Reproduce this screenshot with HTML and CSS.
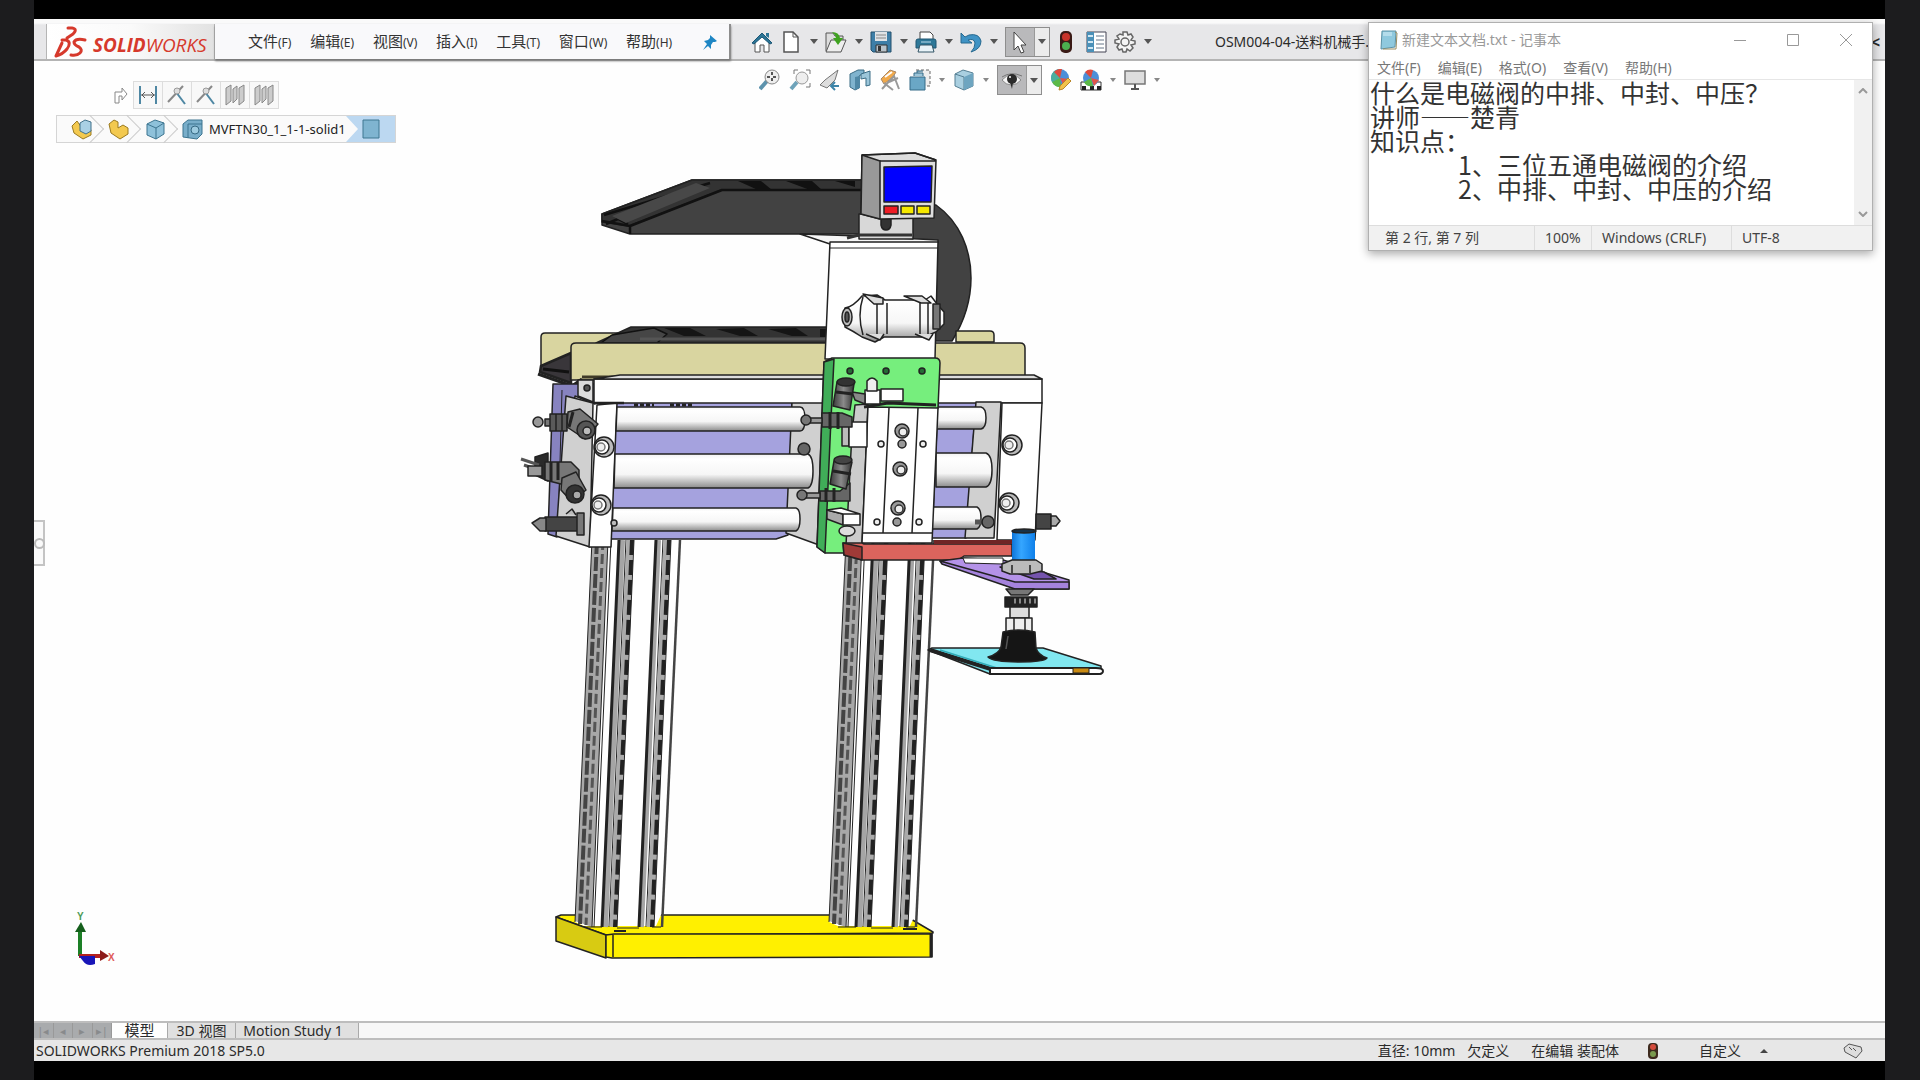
FILE: index.html
```html
<!DOCTYPE html>
<html lang="zh-CN">
<head>
<meta charset="utf-8">
<title>SOLIDWORKS Premium 2018</title>
<link rel="stylesheet" href="styles.css">
</head>
<body>
<div class="stage">
<div class="app">
  <header class="topbar">
    <div class="brand">
      <svg class="brand-mark" width="34" height="32" viewBox="0 0 34 32" fill="none" stroke="#d6392c" stroke-width="3" stroke-linecap="round" stroke-linejoin="round"><path d="M14 2h4q6 1 1 6l-6 4"/><path d="M8 14h4q6 2 1 9-4 5-11 7l6-13"/><path d="M31 14q-9-2-11 2 0 3 5 5 4 3 1 6-3 3-9 2"/></svg>
      <span class="brand-name"><b>SOLID</b>WORKS</span>
    </div>
    <nav class="menu">
      <button>文件<small>(F)</small></button>
      <button>编辑<small>(E)</small></button>
      <button>视图<small>(V)</small></button>
      <button>插入<small>(I)</small></button>
      <button>工具<small>(T)</small></button>
      <button>窗口<small>(W)</small></button>
      <button>帮助<small>(H)</small></button>
      <button class="pin" aria-label="固定菜单"><svg width="18" height="18" viewBox="0 0 18 18"><path d="M9 2l7 6-2 1-2 0-2 3 0 4-3-3-5 4 4-6-3-3 4-1 2-2z" fill="#1e86c4"/></svg></button>
    </nav>
    <div class="tools">
      <button class="ico gap" aria-label="主页"><svg viewBox="0 0 22 22"><path d="M4 10v11h5v-7h4v7h5V10l-7-6z" fill="#fff" stroke="#555"/><path d="M1 12L11 2l10 10-2 1-8-7-8 7z" fill="#2c7596" stroke="#1b5675"/><path d="M15 2h3v5l-3-2z" fill="#2c7596"/></svg></button>
      <button class="ico" aria-label="新建"><svg viewBox="0 0 22 22"><path d="M4 1h9l5 5v15H4z" fill="#fff" stroke="#555" stroke-width="1.500"/><path d="M13 1v5h5" fill="none" stroke="#555"/></svg></button>
      <button class="drop" aria-label="新建选项"></button>
      <button class="ico" aria-label="打开"><svg viewBox="0 0 22 22"><path d="M1 20V2h7l2 3h8v5" fill="#ddd" stroke="#555"/><path d="M1 21L6 9h15l-5 12z" fill="#eee" stroke="#555"/><path d="M7 1q7 0 8 6h3l-5 7-5-7h3q-1-4-4-6z" fill="#3fa31f"/></svg></button>
      <button class="drop" aria-label="打开选项"></button>
      <button class="ico" aria-label="保存"><svg viewBox="0 0 22 22"><path d="M1 1h20v20H3l-2-2z" fill="#3d7ea7" stroke="#25506c"/><path d="M5 1h12v9H5z" fill="#dfe3e6"/><path d="M6 4h10M6 7h10" stroke="#888"/><path d="M6 14h11v7H6z" fill="#b9c3ca" stroke="#333"/><path d="M8 15h3v5H8z" fill="#333"/></svg></button>
      <button class="drop" aria-label="保存选项"></button>
      <button class="ico" aria-label="打印"><svg viewBox="0 0 22 22"><path d="M5 9V1h10l3 3v5" fill="#fff" stroke="#444"/><path d="M1 10q0-2 2-2h16q2 0 2 2v7H1z" fill="#2e7898" stroke="#205772"/><path d="M5 14h12l2 7H3z" fill="#e9f3f8" stroke="#356"/><path d="M6 11h10" stroke="#bde"/></svg></button>
      <button class="drop" aria-label="打印选项"></button>
      <button class="ico" aria-label="撤消"><svg viewBox="0 0 22 22"><path d="M1 2v10h11L8 9q6-2 7 3 0 5-4 9 10-3 10-11Q19 2 9 4L5 6z" fill="#3f93c5" stroke="#27698f"/></svg></button>
      <button class="drop" aria-label="撤消选项"></button>
      <div class="split">
        <button class="on" aria-label="选择"><svg width="22" height="24" viewBox="0 0 22 24"><path d="M5 2v18l4-4 3 7 3-1-3-7h5z" fill="#fff" stroke="#444"/></svg></button><button class="drop" aria-label="选择选项"></button>
      </div>
      <button class="ico light" aria-label="重建模型"><svg viewBox="0 0 22 22"><rect x="5" y="0" width="12" height="22" rx="5" fill="#3a1a16"/><circle cx="11" cy="6" r="4" fill="#c8332a"/><circle cx="11" cy="15" r="4" fill="#4cae4f"/></svg></button>
      <button class="ico gap" aria-label="文件属性"><svg viewBox="0 0 22 22"><path d="M2 1h19v20H2z" fill="#fff" stroke="#445"/><path d="M2 1h7v20H2z" fill="#4a90b8"/><path d="M3 5h5M3 11h5M3 17h5" stroke="#cfe6f2" stroke-width="2"/><path d="M11 5h8M11 9h8M11 13h8M11 17h8" stroke="#678"/></svg></button>
      <button class="ico" aria-label="选项"><svg viewBox="0 0 22 22" fill="none" stroke="#666" stroke-width="1.500"><path d="M9 1h4l1 3 3-1 2 3-2 3 4 1v3l-4 1 2 3-3 3-3-2-1 3H9l-1-3-3 1-2-3 2-3-4-1V9l4-1-2-3 3-2 3 1z" fill="#f4f4f4"/><circle cx="11" cy="11" r="4"/></svg></button>
      <button class="drop" aria-label="选项菜单"></button>
      <span class="doc">OSM004-04-送料机械手.</span>
    </div>
    <span class="chev">&lt;</span>
  </header>

  <main class="viewport">
    <div class="overlays">
      <div class="context">
        <div class="mates">
          <svg width="15" height="18" viewBox="0 0 15 18"><path d="M2 17V6h7V2l5 6-5 6v-4H6v7z" fill="#fff" stroke="#888"/></svg>
          <div class="mate-row">
            <button aria-label="距离配合"><svg viewBox="0 0 22 22" stroke="#4e87a3" stroke-width="2" fill="none"><path d="M3 2v18M19 2v18"/><path d="M4 11h14M8 8l-3 3 3 3M14 8l3 3-3 3" stroke="#555" stroke-width="1"/></svg></button>
            <button aria-label="重合配合一"><svg viewBox="0 0 22 22" fill="none" stroke-width="2"><path d="M2 18L17 2" stroke="#888"/><path d="M10 8l9 12" stroke="#4e87a3"/><circle cx="11" cy="7" r="3" fill="#ddd" stroke="#999" stroke-width="1"/></svg></button>
            <button aria-label="重合配合二"><svg viewBox="0 0 22 22" fill="none" stroke-width="2"><path d="M2 18L17 2" stroke="#888"/><path d="M10 8l9 12" stroke="#4e87a3"/><circle cx="11" cy="7" r="3" fill="#ddd" stroke="#999" stroke-width="1"/></svg></button>
            <button aria-label="对称配合一"><svg viewBox="0 0 22 22" fill="#ccc" stroke="#888"><path d="M2 4l5-3v16l-5 4zM9 5l4-3v13l-4 4zM15 4l5-3v16l-5 4z"/></svg></button>
            <button aria-label="对称配合二"><svg viewBox="0 0 22 22" fill="#ccc" stroke="#888"><path d="M2 4l5-3v16l-5 4zM9 5l4-3v13l-4 4zM15 4l5-3v16l-5 4z"/></svg></button>
          </div>
        </div>
        <nav class="crumbs">
          <a href="#assembly" aria-label="装配体"><svg viewBox="0 0 22 22"><path d="M1 8l5-5 5 7 5-3 4 5v5l-8 4-9-6z" fill="#f3c94f" stroke="#9a7a20"/><path d="M9 5l5-3 6 2v9l-5 3-6-3z" fill="#a9d0e4" stroke="#41718a"/></svg></a>
          <a href="#sub" aria-label="子装配体"><svg viewBox="0 0 22 22"><path d="M1 6l5-4 4 2v6l5-3 5 3v6l-8 5-9-6z" fill="#f3c94f" stroke="#9a7a20"/></svg></a>
          <a href="#body" aria-label="实体"><svg viewBox="0 0 22 22"><path d="M2 6l8-4 9 3v11l-8 5-9-4z" fill="#8ec1da" stroke="#3d7590"/><path d="M2 6l9 4 8-5M11 10v11" fill="none" stroke="#3d7590"/></svg></a>
          <a href="#feature" class="named"><svg viewBox="0 0 22 22"><path d="M1 6l5-4h14v14l-5 5-14-2z" fill="#79aeca" stroke="#3d7590"/><path d="M6 6h14M6 6v14" stroke="#3d7590"/><circle cx="13" cy="12" r="4" fill="#9dcbe0" stroke="#376a84"/></svg>MVFTN30_1_1-1-solid1</a>
          <a href="#face" class="face" aria-label="面"><svg viewBox="0 0 22 22"><path d="M3 2h16v18H3z" fill="#7fb4d0" stroke="#3f7690"/></svg></a>
        </nav>
      </div>
      <div class="views">
        <button class="ico" aria-label="整屏显示"><svg viewBox="0 0 22 22"><path d="M1 20l7-8" stroke="#5d93ad" stroke-width="4"/><circle cx="13" cy="8" r="7" fill="#eee" stroke="#888"/><path d="M13 3v10M8 8h10" stroke="#555" stroke-dasharray="3 3" stroke-width="2"/></svg></button>
        <button class="ico" aria-label="局部放大"><svg viewBox="0 0 22 22"><path d="M2 20l6-7" stroke="#6fa3ba" stroke-width="4"/><circle cx="13" cy="9" r="6" fill="#eee" stroke="#999"/><path d="M5 5V1h4M17 1h4v4M21 14v4h-4" fill="none" stroke="#777"/></svg></button>
        <button class="ico" aria-label="上一视图"><svg viewBox="0 0 22 22"><path d="M1 16l5-5L19 1l-3 10-8 8z" fill="#ddd" stroke="#777"/><path d="M20 17h-8m4-4l-4 4 4 4" fill="none" stroke="#3c84a8" stroke-width="2"/></svg></button>
        <button class="ico" aria-label="剖面视图"><svg viewBox="0 0 22 22"><path d="M1 5l8-4h6v3l-5 3v12l-4 2-5-3z" fill="#7fb3ce" stroke="#3b6c85"/><path d="M6 8l5-1v12l-5 2z" fill="#4f88a6"/><path d="M12 5l9-3v14l-4 1V9l-5 1z" fill="#9cc6da" stroke="#3b6c85"/></svg></button>
        <button class="ico" aria-label="动态注解"><svg viewBox="0 0 22 22"><path d="M2 10L11 1l6 2-3 5-9 7z" fill="#f0a94b" stroke="#a86"/><path d="M6 8l7-5" stroke="#fff" stroke-width="2"/><path d="M3 20L15 7l5 13M5 14l9 7M10 13l9-4" fill="none" stroke="#999" stroke-width="2"/></svg></button>
        <button class="ico" aria-label="视图定向"><svg viewBox="0 0 22 22"><path d="M7 1h14v16h-5" fill="#eee" stroke="#666" stroke-dasharray="3 2"/><path d="M1 8h15v13H1z" fill="#6aa7c6" stroke="#356b87"/><path d="M5 7V4h9v3M8 4V2h6" fill="#9cc6da" stroke="#356b87"/></svg></button>
        <button class="tri" aria-label="定向选项"></button>
        <button class="ico" aria-label="显示样式"><svg viewBox="0 0 22 22"><path d="M2 5l8-4 10 3v13l-9 4-9-4z" fill="#a9cfe0" stroke="#557f93"/><path d="M2 5l9 3v13" fill="none" stroke="#557f93"/><path d="M11 8l9-4v13l-9 4z" fill="#6ea5c0"/></svg></button>
        <button class="tri" aria-label="样式选项"></button>
        <div class="split">
          <button class="on" aria-label="隐藏/显示项目"><svg width="24" height="24" viewBox="0 0 24 24"><path d="M2 9q9-6 20-1" fill="none" stroke="#777"/><path d="M2 12q4-5 10-5 5 0 9 5-4 5-10 5-5 0-9-5z" fill="#f5f5f5" stroke="#888"/><circle cx="12" cy="11" r="5" fill="#2b2b2b"/><circle cx="10" cy="9" r="1" fill="#fff"/><path d="M13 14l-1 7-2-7z" fill="#2b2b2b"/></svg></button><button class="drop" aria-label="显示选项"></button>
        </div>
        <button class="ico" aria-label="编辑外观"><svg viewBox="0 0 22 22"><circle cx="10" cy="9" r="9" fill="#4c8fd8"/><path d="M10 9V0A9 9 0 0 0 2 13z" fill="#4cae9d"/><path d="M10 9L4 3a9 9 0 0 1 8-3z" fill="#e0493d"/><path d="M10 9L2 13a9 9 0 0 0 9 5z" fill="#5cb947"/><path d="M10 9l9 1-5 7z" fill="#e0564a"/><path d="M9 21l1-4 8-8 3 3-8 8z" fill="#f1c34c" stroke="#b8862b"/></svg></button>
        <button class="ico" aria-label="应用布景"><svg viewBox="0 0 22 22"><path d="M1 13h20v8H1z" fill="#fff" stroke="#333"/><path d="M2 17h4v4H2zM10 17h4v4h-4zM17 17h4v4h-4z" fill="#222"/><circle cx="11" cy="9" r="8" fill="#4c8fd8"/><path d="M11 9L5 3a8 8 0 0 1 8-2z" fill="#e0493d"/><path d="M11 9l-7 4a8 8 0 0 0 9 4z" fill="#5cb947"/><path d="M11 9l8 2-5 6z" fill="#e0564a"/></svg></button>
        <button class="tri" aria-label="布景选项"></button>
        <button class="ico" aria-label="视图设定"><svg viewBox="0 0 22 22"><path d="M1 2h20v13H1z" fill="#ddd" stroke="#777" stroke-width="1.500"/><path d="M11 15v4M7 20h8" stroke="#555" stroke-width="2"/></svg></button>
        <button class="tri" aria-label="设定选项"></button>
      </div>
    </div>

    <svg class="model" width="640" height="830" viewBox="480 150 640 830" stroke="#222" stroke-width="1.500" stroke-linejoin="round" role="img" aria-label="送料机械手">
      <defs>
        <linearGradient id="rod" x1="0" y1="0" x2="0" y2="1"><stop offset="0" stop-color="#f2f2f2"/><stop offset=".15" stop-color="#fff"/><stop offset=".6" stop-color="#f6f6f6"/><stop offset="1" stop-color="#8c8c8c"/></linearGradient>
        <linearGradient id="blue" x1="0" y1="0" x2="1" y2="0"><stop offset="0" stop-color="#0d74d8"/><stop offset=".4" stop-color="#35a6ff"/><stop offset="1" stop-color="#0f80ea"/></linearGradient>
        <linearGradient id="dark" x1="0" y1="0" x2="1" y2="0"><stop offset="0" stop-color="#3a3a3a"/><stop offset=".5" stop-color="#8a8a8a"/><stop offset="1" stop-color="#333"/></linearGradient>
        <g id="leg">
          <path d="M592 540L575 922l9 4h72l5-11 19-375z" fill="#fff" stroke="none"/>
          <path d="M592 540h16l-16 387-17-6z" fill="#a8a8a8" stroke="none"/>
          <path d="M597 540l-17 384" stroke="#444" stroke-width="4" stroke-dasharray="14 3" fill="none"/>
          <path d="M603 540l-17 385" stroke="#555" stroke-width="3" stroke-dasharray="10 4" fill="none"/>
          <path d="M592 540l-17 382M608 540l-16 387M611 540l-17 387" stroke-width="1" fill="none"/>
          <path d="M622 540l-17 387M658 540l-17 387" stroke-width="6" stroke="#a5a5a5"/>
          <path d="M619 540l-17 387M656 540l-17 387" stroke-width="3"/>
          <path d="M626 540l-17 387M663 540l-17 387" stroke-width="1"/>
          <path d="M630 540l-17 387M667 540l-17 387" stroke-width="7" stroke="#aaa"/>
          <path d="M632 540l-17 387M669 540l-17 387" stroke-width="4" stroke-dasharray="15 5"/>
          <path d="M634 540l-17 387M671 540l-17 387" stroke-width="1"/>
          <path d="M680 540l-18 387" stroke-width="2.500" stroke="#444"/>
          <path d="M584 927h18M617 928h22M652 927h9" stroke-width="1"/>
        </g>
        <g id="screw"><circle r="10" fill="#bbb"/><circle r="7" cx="-2" fill="#fff"/><circle r="4" cx="-3" fill="#eee" stroke="#777"/></g>
        <g id="hole"><circle r="7" fill="#999"/><circle r="4" cx="1" cy="1" fill="#eee" stroke="#333"/></g>
      </defs>

      <!-- base tray -->
      <path d="M556 917l5-2H904l29 17v1l-321 2-6 0z" fill="#fff000"/>
      <path d="M556 917l50 18v23l-50-17z" fill="#d8cb12"/>
      <path d="M606 935l8-1H932v23l-320 1-6-1z" fill="#fff000"/>
      <path d="M613 935v22" fill="none"/><path d="M931 933v24" stroke-width="3"/>
      <path d="M614 931h12M903 929h14" stroke-width="2"/>
      <use href="#leg"/><use href="#leg" x="254"/>

      <!-- cable chain -->
      <path d="M912 205h24C960 222 971 250 971 278c0 27-9 47-19 63H912z" fill="#424242"/>
      <path d="M602 214l90-34H862v54H630l-28-9z" fill="#424242"/>
      <path d="M692 180H862v10H721l-92 36-27-4v-8z" fill="#333"/>
      <path d="M604 215l106-32M602 221l28 5v8M630 226l92-36h140M606 224l12-5 10 5" fill="none" stroke="#111" stroke-width="2.500"/>
      <path d="M612 216l84-33 14 5-84 35z" fill="#484848" stroke="none"/>
      <path d="M738 181l20 9h14l-11-9zM786 181l24 9h12l-10-9zM835 181l20 6v-6z" fill="#111" stroke="none"/>

      <!-- trough -->
      <path d="M956 342v-11h34q4 0 4 4v7z" fill="#d9d5a0"/>
      <path d="M541 369v-32q0-4 4-4H625l-40 22-44 14z" fill="#d9d5a0"/>
      <path d="M541 366l30-13v30l-31-11z" fill="#39363a" stroke-width="2.500"/>
      <path d="M543 369l26 3" stroke="#111" stroke-width="3"/>
      <path d="M596 343l35-16H828v16z" fill="#333"/>
      <path d="M612 335l42-7 13 6-10 9h-56z" fill="#464646" stroke="#111"/>
      <path d="M664 328l20 8h22l-16-8zM716 329l24 7h18l-14-8zM768 329l24 7h16l-12-8zM820 329v8h6v-8z" fill="#151515" stroke="none"/>
      <path d="M640 339h188" stroke="#555" stroke-width="3"/>
      <path d="M571 383v-36q0-4 5-4H1020q5 0 5 5v32H571z" fill="#d9d5a0"/>
      <path d="M538 374l34 12 10-7" fill="none" stroke-width="3"/>
      <path d="M582 377H820" stroke="#3f3a28" stroke-width="3"/>

      <!-- slide body -->
      <path d="M553 384h42v20l-20-8-18 141-9-3z" fill="#8783c0"/>
      <path d="M616 402H792l-4 133-12 4H610z" fill="#a5a2de"/>
      <path d="M562 390l-4 145" stroke-width="1"/>
      <path d="M938 402h38l-10 136h-34z" fill="#a5a2de"/>
      <path d="M634 405h20M670 405h22" stroke-width="3" stroke-dasharray="4 2"/>
      <path d="M566 396l27 7-3 144-34-11z" fill="#d0d0d0"/>
      <path d="M792 402h38l-11 143-33-12z" fill="#d0d0d0"/>
      <path d="M594 379H1042v24H594z" fill="#fff"/>
      <path d="M594 379H1042l-8-4H620z" fill="#ddd"/>
      <path d="M578 380h15v22l-15-6z" fill="#ddd"/><circle cx="587" cy="388" r="3" fill="#555"/>
      <path d="M597 405l20-2-6 144h-22z" fill="#fff"/>
      <path d="M594 403h30" stroke-width="2.500"/>
      <path d="M617 407H800q5 0 5 12t-5 12H616z" fill="url(#rod)"/>
      <path d="M615 454H808q5 2 5 17t-5 17H614z" fill="url(#rod)"/>
      <path d="M613 508H796q4 1 4 11t-4 12H612z" fill="url(#rod)"/>
      <use href="#screw" x="604" y="447"/><use href="#screw" x="601" y="505"/>
      <circle cx="614" cy="523" r="3" fill="#bbb"/>
      <circle cx="804" cy="449" r="6" fill="#666"/>
      <path d="M976 402h25l-7 136h-29z" fill="#d0d0d0"/>
      <path d="M1002 403h40l-7 137h-38z" fill="#fff"/>
      <path d="M936 407h45q5 1 5 11t-5 11h-45z" fill="url(#rod)"/>
      <path d="M936 453h50q6 2 6 17t-6 17h-50z" fill="url(#rod)"/>
      <path d="M932 507h45q4 2 4 11t-4 11h-45z" fill="url(#rod)"/>
      <path d="M975 522h15" stroke-width="5" stroke="#555"/><circle cx="988" cy="522" r="6" fill="#666"/>
      <use href="#screw" x="1012" y="445"/><use href="#screw" x="1009" y="503"/>
      <path d="M1036 514h15v15h-15z" fill="#444"/><path d="M1051 516h5l4 5-4 5h-5z" fill="#aaa"/>

      <!-- air fittings on the left -->
      <g fill="#777">
        <path d="M545 419h12v7h-12z"/><circle cx="538" cy="422" r="5" fill="#999"/><path d="M550 414h17v17h-17z" fill="#5a5a5a"/><path d="M556 414v17M562 414v17"/><path d="M568 412l12-3 18 15-13 15-18-12z"/><path d="M573 412l-4 15" stroke-width="3"/><circle cx="586" cy="430" r="9" fill="#555"/><circle cx="587" cy="431" r="4" fill="#bbb"/>
        <path d="M535 457l13-4v28l-13-6z" fill="#2a2a2a"/><path d="M521 459l18 6M524 465l14 5" stroke-width="3" stroke="#555"/><path d="M528 466h14v10h-14z" fill="#999"/><path d="M545 462h26l8 8v12l-10 4-24-6z"/><path d="M551 462v19M558 462v18" stroke-width="3"/><path d="M562 478l14-6 10 18-14 12-11-12z"/><circle cx="575" cy="494" r="9" fill="#333"/><circle cx="577" cy="495" r="4" fill="#aaa"/>
        <path d="M545 517h34v14h-34z" fill="#444"/><path d="M532 523l8-5h6v13h-6z" fill="#888"/><path d="M577 513h7v22h-7z"/><path d="M566 514l6-5 4 6" fill="#bbb"/>
      </g>

      <!-- upright plate, display and filter -->
      <path d="M800 234l60 2 78 4v3l-108 1z" fill="#f6f6f6"/>
      <path d="M830 242H938l-3 117H825z" fill="#fff"/>
      <path d="M829 248H938" stroke-width="1"/>
      <path d="M859 214h54v25h-54z" fill="#d8d8d8"/><path d="M847 238l12-3h53" stroke-width="3" fill="none" stroke="#333"/>
      <path d="M881 219h10v6q-1 5-5 5t-5-5z" fill="#333"/>
      <path d="M862 155l53-2 21 7-2 58-54 1-19-5z" fill="#ddd"/>
      <path d="M862 155l18 6v58l-19-5z" fill="#999"/><path d="M880 161h56M862 155l53-2 21 7" fill="none"/>
      <path d="M884 167l48-1-1 36h-47z" fill="#0000ff"/>
      <path d="M884 206h14v8h-14z" fill="#ed1c24"/><path d="M901 206h13v8h-13zM917 206h13v8h-13z" fill="#f5e800"/>
      <path d="M845 308q8-1 17-12l15-1 8 5h40l6-4 6 8 7 8v12l-8 8-12 5h-40l-9 5-13-5q-9-6-17-10z" fill="url(#rod)"/>
      <ellipse cx="847" cy="317" rx="5" ry="9" fill="#bbb"/><ellipse cx="847" cy="317" rx="2" ry="5" fill="#555"/>
      <path d="M863 297q-6 18 0 38M877 303v31M887 303v31M920 303v31M928 303v31" fill="none"/>
      <path d="M863 294l20 4v6h-9zM904 296h18l9 7h-10z" fill="#ddd"/><path d="M866 334l14 6 4-6M915 334l14 6 4-6" fill="#ddd"/>
      <path d="M933 304h7v25h-7z" fill="#777"/>

      <!-- green carriage -->
      <path d="M824 362l8-4h103q5 0 5 5l-2 45-92 145h-21l-8-6z" fill="#76ee7d"/>
      <path d="M824 362l10-3-3 60-6 134-8-6z" fill="#40ad58"/>
      <g fill="#256b35"><circle cx="850" cy="371" r="3"/><circle cx="886" cy="371" r="3"/><circle cx="922" cy="371" r="3"/></g>
      <path d="M855 405l13-1-6 140-16 1 6-112z" fill="#ccc"/>
      <path d="M868 407l70 1-6 135h-70z" fill="#fff"/>
      <path d="M889 408l-6 125M918 408l-6 125M862 533h70" fill="none"/>
      <path d="M864 407l24-4 48 2" fill="none" stroke-width="3"/>
      <use href="#hole" x="902" y="431"/><use href="#hole" x="900" y="469"/><use href="#hole" x="898" y="508"/>
      <g fill="#999"><circle cx="902" cy="444" r="4"/><circle cx="897" cy="522" r="4"/></g>
      <g fill="#eee"><circle cx="881" cy="444" r="3"/><circle cx="923" cy="444" r="3"/><circle cx="877" cy="522" r="3"/><circle cx="919" cy="522" r="3"/></g>
      <path d="M842 420h7v26h-7z" fill="#bbb"/><path d="M849 422h18v25h-18z" fill="#fff"/>
      <path d="M827 510l16 4v11l-16-6z" fill="#aaa"/><path d="M843 514h17v11h-17zM827 510l14-2 19 6h-17z" fill="#fff"/><ellipse cx="847" cy="531" rx="8" ry="5" fill="#ddd"/>
      <path d="M881 389h22v12h-22z" fill="#fff"/><path d="M865 390h15v14h-15z" fill="#fff"/><path d="M867 381q5-6 10 0v10h-10z" fill="#eee"/><path d="M852 392l13 2v10l-10-4z" fill="#888"/>
      <g>
        <path d="M822 413h20l10 4v10h-30z" fill="#666"/><path d="M806 418h16v5h-16z" fill="#999"/><circle cx="806" cy="420" r="5" fill="#777"/><path d="M830 412v17M838 412v17" stroke-width="3"/>
        <path d="M837 382l17 2-4 26-17-4z" fill="url(#dark)"/><ellipse cx="846" cy="382" rx="9" ry="4" fill="#333"/><path d="M836 392l17 2" stroke-width="3"/>
        <path d="M820 491h20l10-8v18h-30z" fill="#666"/><path d="M804 493h16v5h-16z" fill="#999"/><circle cx="802" cy="495" r="5" fill="#777"/><path d="M826 488v14M834 488v14" stroke-width="3"/>
        <path d="M834 461l18 1-6 27-16-5z" fill="url(#dark)"/><ellipse cx="843" cy="460" rx="9" ry="4" fill="#444"/><path d="M833 471l18 3" stroke-width="3"/>
      </g>

      <!-- suction arm -->
      <path d="M843 543h19l2 1h148v12h-48l-6 4h-96l-18-5z" fill="#dc645d"/>
      <path d="M843 543l19 4v13l-18-5z" fill="#9f3a37"/>
      <path d="M934 540h78v4h-78z" fill="#6f2525" stroke="none"/>
      <path d="M940 561l23-3 40 2 66 20v9h-53z" fill="#b492e8"/>
      <path d="M940 561l75 21h54v7h-54l-73-25z" fill="#a583dd"/>
      <path d="M963 558h40v6l-38-1z" fill="#fff" stroke-width="1"/>
      <path d="M1000 567l44 5 12 7h-22z" fill="#7554ad"/>
      <path d="M1012 531h23v29h-23z" fill="url(#blue)" stroke="none"/><ellipse cx="1024" cy="531" rx="12" ry="2" fill="#183247"/>
      <path d="M1002 564l10-4h24l6 4v7l-12 3h-20l-8-3z" fill="#bbb"/><path d="M1012 565v8M1030 565v8" fill="none"/>
      <path d="M1006 589h28l-6 6h-17z" fill="#777"/>
      <path d="M1005 597h32v10h-32z" fill="#222"/><path d="M1014 601h22" stroke="#888" stroke-width="5" stroke-dasharray="2 3"/>
      <path d="M1010 607h19v11h-19z" fill="#ddd"/>
      <path d="M928 650l4-2H1043l58 18v8H990z" fill="#81e7f0"/>
      <path d="M930 650l64 20" stroke-width="4"/><path d="M940 650l60 19" stroke="#31acb8" fill="none"/>
      <path d="M990 668h106q7 0 7 3t-5 3H990z" fill="#fff" stroke-width="2"/><path d="M1073 668h16v5h-16z" fill="#c98a12" stroke-width="1"/>
      <path d="M1006 618h26v14h-26z" fill="#eee"/><path d="M1014 618v14M1025 618v14"/>
      <path d="M1003 632q16-4 32 0l1 16q2 7 11 10-2 4-28 4t-31-5q11-3 13-10z" fill="#151515"/><path d="M1008 636l-2 13" stroke="#555"/>
    </svg>

    <svg class="triad" width="44" height="60" viewBox="0 0 44 60"><path d="M5 46V20h4v26z" fill="#1c7f26"/><path d="M8 12l5 10H2z" fill="#155f1c"/><path d="M6 44h24v4H6z" fill="#b3211f"/><path d="M27 40l9 6-9 5z" fill="#8c1b19"/><path d="M6 46h16v8q-8 3-12-3z" fill="#1815b8"/><text x="4" y="10" class="axis" fill="#4b9a55">Y</text><text x="35" y="51" class="axis" fill="#e05a5a">X</text></svg>
    <button class="panel-tab" aria-label="展开面板"></button>
  </main>

  <nav class="tabs">
    <div class="steps"><button aria-label="第一个">|◂</button><button aria-label="上一个">◂</button><button aria-label="下一个">▸</button><button aria-label="最后一个">▸|</button></div>
    <button class="tab current">模型</button><button class="tab">3D 视图</button><button class="tab study">Motion Study 1</button>
  </nav>
  <footer class="status">
    <span class="version">SOLIDWORKS Premium 2018 SP5.0</span>
    <span class="dim">直径: 10mm</span><span>欠定义</span><span class="edit">在编辑 装配体</span>
    <svg class="signal" width="10" height="16" viewBox="0 0 10 16"><rect width="10" height="16" rx="4" fill="#3d2a1e"/><circle cx="5" cy="4" r="3" fill="#d34b3c"/><circle cx="5" cy="11" r="3" fill="#7a9a4e"/></svg>
    <span>自定义</span><i class="up"></i>
    <svg class="tag" width="20" height="16" viewBox="0 0 20 16"><path d="M1 5l5-4 12 3 1 4-6 7L2 9z" fill="#ddd" stroke="#555"/><path d="M6 4l3 3M10 5l3 3" stroke="#555"/></svg>
  </footer>

  <section class="notepad">
    <div class="caption">
      <svg width="20" height="20" viewBox="0 0 20 20"><path d="M4 1h14l-1 16-14 2z" fill="#8fc9de" stroke="#5c92a6"/><path d="M17 2l2 1-1 16-13 0" fill="none" stroke="#998c60"/><path d="M5 3h9M5 5h9" stroke="#d9f0f8"/></svg>
      <span class="name">新建文本文档.txt - 记事本</span>
      <button aria-label="最小化"><svg viewBox="0 0 12 12"><path d="M0 6.500h12"/></svg></button>
      <button aria-label="最大化"><svg viewBox="0 0 12 12"><path d="M.5.5h11v11H.5z"/></svg></button>
      <button aria-label="关闭"><svg viewBox="0 0 12 12"><path d="M0 0l12 12M12 0L0 12"/></svg></button>
    </div>
    <nav class="np-menu"><button>文件(F)</button><button>编辑(E)</button><button>格式(O)</button><button>查看(V)</button><button>帮助(H)</button></nav>
    <div class="np-body">
      <textarea aria-label="文本" spellcheck="false" wrap="off">什么是电磁阀的中排、中封、中压？
讲师——楚青
知识点：
	1、三位五通电磁阀的介绍
	2、中排、中封、中压的介绍</textarea>
      <div class="bar"><svg viewBox="0 0 10 6"><path d="M1 5l4-4 4 4"/></svg><svg viewBox="0 0 10 6"><path d="M1 1l4 4 4-4"/></svg></div>
    </div>
    <div class="np-status"><span class="pos">第 2 行, 第 7 列</span><span class="zoom">100%</span><span class="eol">Windows (CRLF)</span><span>UTF-8</span></div>
  </section>
</div>
</div>
</body>
</html>
```
FILE: styles.css
```css
* { box-sizing: border-box; }
body {
  margin: 0;
  background: #1c1c1e;
  color: #2b2b2b;
  font: 15px/20px "Noto Sans", "Noto Sans CJK SC", sans-serif;
}
button {
  margin: 0; padding: 0; border: 0; background: none;
  color: inherit; font: inherit; white-space: nowrap;
}
svg { display: block; flex: none; }

.stage { min-height: 100vh; margin: 0 35px 0 34px; padding: 19px 0; background: #000; display: flex; }
.app { position: relative; flex: 1; min-width: 0; display: flex; flex-direction: column; background: #fefefe; }

/* top bar */
.topbar {
  display: flex; align-items: stretch; height: 42px; padding: 5px 0 0 12px;
  background: linear-gradient(#fafafa 0 4px, #e7e7e9 6px); border-bottom: 2px solid #b4b4b4;
}
.brand {
  width: 169px; flex: none; display: flex; align-items: center; gap: 5px; padding-left: 7px;
  background: linear-gradient(90deg, #fff, #fafafa 50%, #e2e2e2); border: solid #b5b5b5; border-width: 0 1px; color: #d6392c;
}
.brand-name { font: italic 19px/24px "Open Sans", sans-serif; padding-top: 6px; }
.menu {
  width: 516px; flex: none; display: flex; align-items: center; justify-content: space-between; padding: 0 10px 0 33px;
  background: #f9f9fb; border-right: 2px solid #8d8d8d; box-shadow: 0 2px 2px #777;
}
.menu button { font-size: 15px; color: #333; }
.menu small { font-size: 12px; }
.menu .pin { margin-left: 10px; }

.tools { flex: 1; min-width: 0; display: flex; align-items: center; padding-left: 20px; }
.ico { flex: none; width: 22px; height: 22px; }
.ico svg { width: 22px; height: 22px; }
.gap { margin-right: 7px; }
.light { margin: 0 8px 0 5px; }
.drop { flex: none; width: 23px; height: 22px; display: grid; place-items: center; }
.drop::before, .tri::before { content: ""; border: solid transparent; border-width: 5px 4px 0; border-top-color: #555; }
.split { flex: none; display: flex; align-items: stretch; width: 45px; height: 30px; border: 1px solid #8e8e8e; background: #ececec; }
.split .on { width: 29px; display: grid; place-items: center; background: #b9b9bb; border-right: 1px solid #999; }
.split .drop { width: 14px; height: auto; }
.doc { margin-left: 56px; white-space: nowrap; font-size: 14px; }
.chev { width: 18px; font-weight: bold; font-size: 16px; line-height: 36px; padding-left: 4px; }

/* viewport */
.viewport { position: relative; flex: 1; }
.overlays { display: flex; align-items: flex-start; height: 89px; }
.context { width: 725px; flex: none; padding: 20px 0 0 22px; }
.mates { display: flex; align-items: center; gap: 5px; padding-left: 57px; }
.mate-row { display: flex; gap: 1px; border: 1px solid #ddd; background: #ddd; }
.mate-row button { width: 28px; height: 26px; display: grid; place-items: center; background: #f8f8f8; }
.mate-row svg { width: 22px; height: 22px; }
.crumbs { display: flex; width: 340px; height: 28px; margin-top: 6px; border: 1px solid #d5d5d5; background: #fafafa; }
.crumbs a { position: relative; width: 37px; display: flex; align-items: center; padding-left: 14px; color: #222; text-decoration: none; font-size: 13px; white-space: nowrap; }
.crumbs svg { width: 22px; height: 22px; margin-right: 5px; }
.crumbs a:not(.face)::after {
  content: ""; position: absolute; right: -6px; top: 3px; width: 19px; height: 19px;
  border: solid #ccc; border-width: 1px 1px 0 0; transform: rotate(45deg);
}
.crumbs .named { width: 178px; }
.crumbs .named::after { display: none; }
.crumbs .face { flex: 1; background: #bcd8f1; padding-left: 14px; clip-path: polygon(0 0, 100% 0, 100% 100%, 0 100%, 12px 50%); }
.views { display: flex; align-items: center; gap: 8px; padding-top: 4px; }
.tri { width: 6px; height: 22px; display: grid; place-items: center; }
.tri::before { border-width: 4px 3px 0; border-top-color: #888; }
.model { margin-left: 446px; }
.triad { position: absolute; left: 39px; bottom: 51px; }
.axis { font: bold 10px/10px "Liberation Sans", sans-serif; }
.panel-tab { position: absolute; left: 0; top: 459px; width: 11px; height: 46px; border: 2px solid #c4c4c4; border-left: 0; background: #fafafa; }
.panel-tab::before { content: ""; display: block; width: 7px; height: 7px; border: 2px solid #bbb; border-radius: 50%; }

/* document tabs */
.tabs { display: flex; height: 19px; background: #f7f7f7; border: solid #bdbdbd; border-width: 2px 0; font-size: 14px; line-height: 15px; }
.steps { width: 78px; display: grid; grid-template-columns: repeat(4, 1fr); background: #a9abad; color: #888a8c; }
.steps button { border-right: 1px solid #999; font-size: 11px; line-height: 13px; }
.tab { width: 68px; background: #e0e0e0; border-right: 1px solid #aaa; line-height: 15px; }
.tab.current { width: 56px; background: #fefefe; font-size: 15px; }
.tab.study { width: 123px; padding-right: 8px; }

.status { display: flex; align-items: center; height: 21px; padding: 0 22px 0 2px; background: #e7e7e7; font-size: 14px; line-height: 20px; white-space: nowrap; }
.version { margin-right: auto; }
.dim { margin-right: 12px; }
.edit { margin: 0 29px 0 22px; }
.signal { margin-right: 41px; }
.up { margin: 0 75px 0 19px; border: solid transparent; border-width: 0 4px 4px; border-bottom-color: #444; }

/* notepad window, floating over the application */
.notepad {
  position: absolute; right: 12px; top: 3px; width: 505px; height: 229px; display: flex; flex-direction: column;
  background: #fff; border: 1px solid #b0b0b0; box-shadow: 0 3px 9px #0005; font-size: 14px; color: #777;
}
.caption { display: flex; align-items: center; height: 34px; padding-left: 9px; }
.caption .name { flex: 1; margin-left: 4px; color: #999; }
.caption button { width: 53px; height: 30px; display: grid; place-items: center; }
.caption svg { overflow: visible; }
.caption button svg { width: 12px; height: 12px; fill: none; stroke: #999; }
.np-menu { display: flex; gap: 17px; height: 22px; padding-left: 8px; }
.np-body { flex: 1; display: flex; border-top: 1px solid #e6e6e6; }
textarea {
  flex: 1; min-width: 0; margin: 0; padding: 0 0 0 1px; border: 0; outline: 0; resize: none; overflow: hidden;
  color: #333; font: 25px/24px "Noto Sans CJK SC", sans-serif; tab-size: 88px; background: #fff;
}
.bar { width: 18px; display: flex; flex-direction: column; justify-content: space-between; align-items: center; padding: 8px 0; background: #f1f1f1; }
.bar svg { width: 10px; height: 6px; fill: none; stroke: #999; stroke-width: 2px; }
.np-status { display: flex; height: 25px; padding-left: 16px; background: #f1f1f1; border-top: 1px solid #ddd; color: #444; line-height: 24px; }
.np-status span + span { padding-left: 10px; border-left: 1px solid #ddd; }
.pos { width: 149px; }
.zoom { width: 57px; }
.eol { width: 140px; }
```
